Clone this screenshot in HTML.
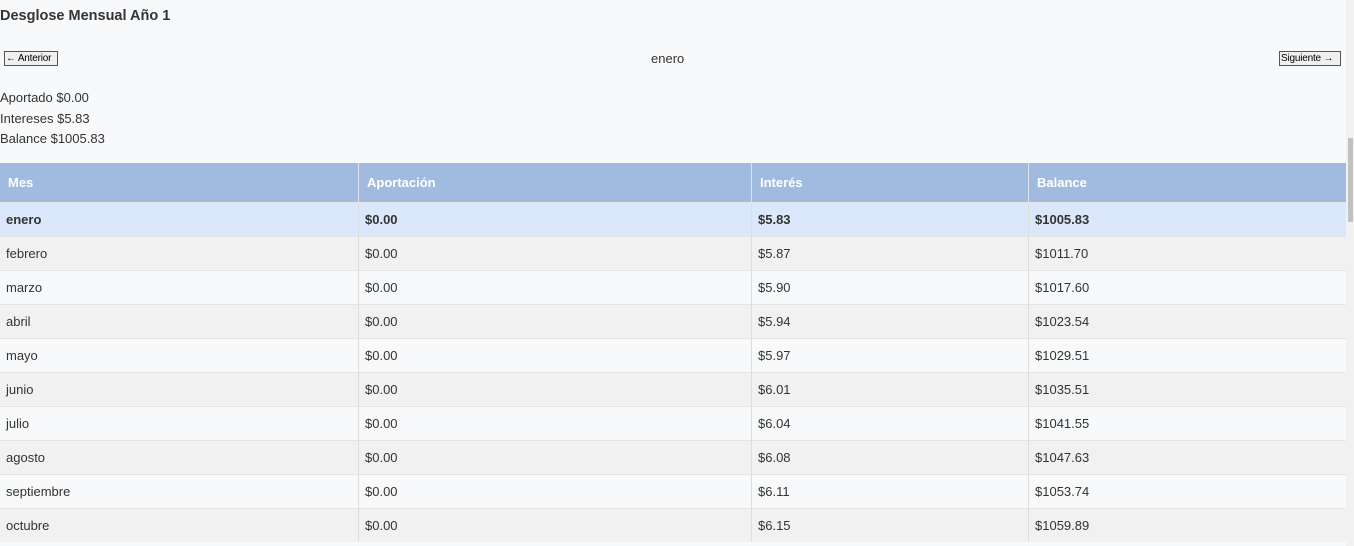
<!DOCTYPE html>
<html><head><meta charset="utf-8"><style>
body{margin:0;width:1354px;height:546px;overflow:hidden;background:#f8f9fb;font-family:"Liberation Sans",Arial,sans-serif;color:#333;position:relative}
h3{position:absolute;left:0;top:8px;margin:0;font-size:14.5px;font-weight:bold;color:#333}
.btn{position:absolute;top:51px;height:13px;border:1px solid #555;background:#f0f0f0;font-size:10px;line-height:13px;padding:0 1px;color:#000;letter-spacing:-0.2px;white-space:nowrap}
.mid{position:absolute;left:651px;top:51px;font-size:13px}
.info{position:absolute;left:0;top:88px;font-size:13px;line-height:20.5px}
table{position:absolute;left:0;top:163px;width:1346px;border-collapse:collapse;font-size:13px}
th{background:#a0bbdf;color:#fff;text-align:left;height:39px;padding:0 0 0 8px;font-weight:bold;border-left:1px solid #dde4ee}
th:first-child{border-left:none}
td{height:33px;padding:0 0 0 6px;border-left:1px solid #ddd;border-top:1px solid #e4e4e4}
td:first-child{border-left:none}
tr:nth-child(odd) td{background:#f1f1f1}
tr:nth-child(even) td{background:#f8f9fa}
tr.sel td{background:#dbe8fc;font-weight:bold}
.sb{position:absolute;left:1346px;top:0;width:8px;height:546px;background:#f1f1f1}
.th{position:absolute;left:1348px;top:138px;width:5px;height:84px;background:#c1c1c1}
</style></head><body>
<h3>Desglose Mensual Año 1</h3>
<div class="btn" style="left:4px;width:50px">← Anterior</div>
<div class="mid">enero</div>
<div class="btn" style="left:1279px;width:58px">Siguiente →</div>
<div class="info">Aportado $0.00<br>Intereses $5.83<br>Balance $1005.83</div>
<table>
<tr><th style="width:350px">Mes</th><th style="width:384px">Aportación</th><th style="width:268px">Interés</th><th>Balance</th></tr>
<tr class="sel"><td>enero</td><td>$0.00</td><td>$5.83</td><td>$1005.83</td></tr>
<tr><td>febrero</td><td>$0.00</td><td>$5.87</td><td>$1011.70</td></tr>
<tr><td>marzo</td><td>$0.00</td><td>$5.90</td><td>$1017.60</td></tr>
<tr><td>abril</td><td>$0.00</td><td>$5.94</td><td>$1023.54</td></tr>
<tr><td>mayo</td><td>$0.00</td><td>$5.97</td><td>$1029.51</td></tr>
<tr><td>junio</td><td>$0.00</td><td>$6.01</td><td>$1035.51</td></tr>
<tr><td>julio</td><td>$0.00</td><td>$6.04</td><td>$1041.55</td></tr>
<tr><td>agosto</td><td>$0.00</td><td>$6.08</td><td>$1047.63</td></tr>
<tr><td>septiembre</td><td>$0.00</td><td>$6.11</td><td>$1053.74</td></tr>
<tr><td>octubre</td><td>$0.00</td><td>$6.15</td><td>$1059.89</td></tr>
</table>
<div class="sb"></div><div class="th"></div>
</body></html>
